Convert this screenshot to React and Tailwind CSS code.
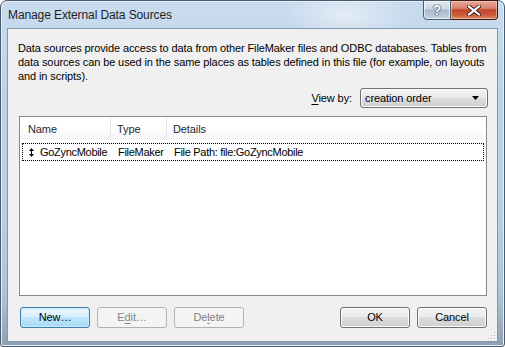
const font = "font-['Segoe_UI','Liberation_Sans',Arial,sans-serif]";

function Btn({ children, kind = "normal" }) {
  const base =
    "w-[70px] h-[21px] rounded-[3px] border flex items-center justify-center text-[11px] tracking-[-0.1px] leading-none";
  const styles = {
    normal:
      "border-[#707070] text-black bg-[linear-gradient(180deg,#f2f2f2_0%,#ebebeb_50%,#dddddd_50%,#cfcfcf_100%)] shadow-[inset_0_0_0_1px_#fbfbfb]",
    default:
      "border-[#3c7fb1] text-black bg-[linear-gradient(180deg,#eaf6fd_0%,#d9f0fc_50%,#bee6fd_50%,#a7d9f5_100%)] shadow-[inset_0_0_0_1px_#cdebfa]",
    disabled: "border-[#adb2b5] text-[#838383] bg-[#f4f4f4]",
  };
  return <div className={`${base} ${styles[kind]}`}>{children}</div>;
}

function ReorderIcon() {
  return (
    <svg width="5" height="9" viewBox="0 0 5 9" className="block shrink-0">
      <polygon points="2.5,0 5,3 0,3" fill="#000" />
      <rect x="2" y="3" width="1" height="3" fill="#000" />
      <polygon points="0,6 5,6 2.5,9" fill="#000" />
    </svg>
  );
}

function Grip() {
  const pts = [
    [8, 0],
    [5, 3],
    [8, 3],
    [2, 6],
    [5, 6],
    [8, 6],
  ];
  return (
    <svg width="10" height="8" viewBox="0 0 10 8" className="block">
      {pts.map(([x, y], i) => (
        <g key={i}>
          <rect x={x} y={y} width="1" height="1" fill="#b8b8b8" />
          <rect x={x + 1} y={y + 1} width="1" height="1" fill="#ffffff" />
        </g>
      ))}
    </svg>
  );
}

export default function App() {
  return (
    <div className={`w-[505px] h-[347px] overflow-hidden bg-white ${font}`}>
      <div className="w-[505px] h-[347px] flex flex-col rounded-t-[7px] rounded-b-[3px] border border-[#4b5b6e] bg-[linear-gradient(180deg,#c9dcef_0%,#bdd3ea_25%,#b9cfe6_60%,#aec3da_85%,#8e9fb3_100%)] shadow-[inset_0_0_0_1px_#e6eff8]">
        {/* Title bar */}
        <div className="h-[27px] flex items-start relative bg-[radial-gradient(ellipse_60px_26px_at_345px_14px,rgba(230,238,246,0.9),rgba(230,238,246,0)_100%)]">
          <div className="pl-[7px] pt-[7px] text-[12px] leading-[15px] tracking-[-0.1px] text-[#1e1e1e]">
            Manage External Data Sources
          </div>
          <div className="flex-1" />
          <div className="flex mr-[6px] mt-[-1px]">
            <div className="w-[28px] h-[20px] border border-[#4f5c6c] rounded-bl-[4px] bg-[linear-gradient(180deg,#e3ebf4_0%,#cad7e5_45%,#aab9ca_50%,#c4d3e2_100%)] shadow-[inset_0_0_0_1px_rgba(255,255,255,0.6)] flex items-center justify-center">
              <span className="text-white text-[14px] font-bold leading-none [text-shadow:0_0_1px_#2a3440,0_0_1px_#2a3440,0_0_1px_#2a3440] font-['Liberation_Sans',sans-serif]">
                ?
              </span>
            </div>
            <div className="w-[47px] h-[20px] border border-l-0 border-[#3e1a12] rounded-br-[4px] bg-[linear-gradient(180deg,#e9a998_0%,#d9846e_40%,#c2452c_50%,#cf5f3d_80%,#e3916a_100%)] shadow-[inset_0_0_0_1px_rgba(255,220,210,0.5)] flex items-center justify-center">
              <svg width="14" height="11" viewBox="0 0 14 11">
                <path
                  d="M2 1.5 L12 9.5 M12 1.5 L2 9.5"
                  stroke="#3a1a14"
                  strokeWidth="4"
                  strokeLinecap="square"
                />
                <path
                  d="M2 1.5 L12 9.5 M12 1.5 L2 9.5"
                  stroke="#ffffff"
                  strokeWidth="2.2"
                  strokeLinecap="square"
                />
              </svg>
            </div>
          </div>
        </div>

        {/* Client area */}
        <div className="mx-[6px] h-[314px] border border-[#8496aa] bg-[#f0f0f0] flex flex-col text-[11px] tracking-[-0.1px] text-black">
          <div className="pl-[10px] pt-[12px] leading-[14px] whitespace-nowrap">
            Data sources provide access to data from other FileMaker files and ODBC databases. Tables from
            <br />
            data sources can be used in the same places as tables defined in this file (for example, on layouts
            <br />
            and in scripts).
          </div>

          <div className="flex items-center justify-end pr-[9px] mt-[5px]">
            <span className="mr-[8px]">
              <span className="underline underline-offset-2">V</span>iew by:
            </span>
            <div className="w-[128px] h-[20px] rounded-[3px] border border-[#707070] bg-[linear-gradient(180deg,#f2f2f2_0%,#ebebeb_50%,#dddddd_50%,#cfcfcf_100%)] shadow-[inset_0_0_0_1px_#fbfbfb] flex items-center pl-[4px] pr-[8px]">
              <span className="flex-1">creation order</span>
              <svg width="7" height="4" viewBox="0 0 7 4">
                <polygon points="0,0 7,0 3.5,4" fill="#000" />
              </svg>
            </div>
          </div>

          <div className="mx-[10px] ml-[11px] mt-[8px] h-[180px] border border-[#828790] bg-white pt-px px-px">
            <div className="h-[22px] mr-[1px] grid grid-cols-[90px_56px_1fr] bg-[linear-gradient(180deg,#ffffff_0%,#ffffff_40%,#f3f4f6_100%)] text-[#1e2a38]">
              <div className="pl-[7px] flex items-center border-r border-[#e3e6ea]">Name</div>
              <div className="pl-[6px] flex items-center border-r border-[#e3e6ea]">Type</div>
              <div className="pl-[6px] flex items-center">Details</div>
            </div>
            <div className="mt-[3px] mx-[1px] h-[18px] border border-dotted border-black grid grid-cols-[89px_56px_1fr] items-center tracking-[-0.3px]">
              <div className="flex items-center pl-[6px] whitespace-nowrap">
                <ReorderIcon />
                <span className="ml-[6px]">GoZyncMobile</span>
              </div>
              <div className="pl-[6px]">FileMaker</div>
              <div className="pl-[6px]">File Path: file:GoZyncMobile</div>
            </div>
          </div>

          <div className="flex items-center mt-[11px] pl-[12px] pr-[10px]">
            <div className="flex gap-[7px]">
              <Btn kind="default">New…</Btn>
              <Btn kind="disabled">
                <span>
                  E<span className="underline underline-offset-2">d</span>it…
                </span>
              </Btn>
              <Btn kind="disabled">
                <span>
                  De<span className="underline underline-offset-2">l</span>ete
                </span>
              </Btn>
            </div>
            <div className="flex-1" />
            <div className="flex gap-[7px]">
              <Btn>OK</Btn>
              <Btn>Cancel</Btn>
            </div>
          </div>
          <div className="flex-1" />
          <div className="flex justify-end pr-[1px] pb-[1px]">
            <Grip />
          </div>
        </div>
      </div>
    </div>
  );
}
